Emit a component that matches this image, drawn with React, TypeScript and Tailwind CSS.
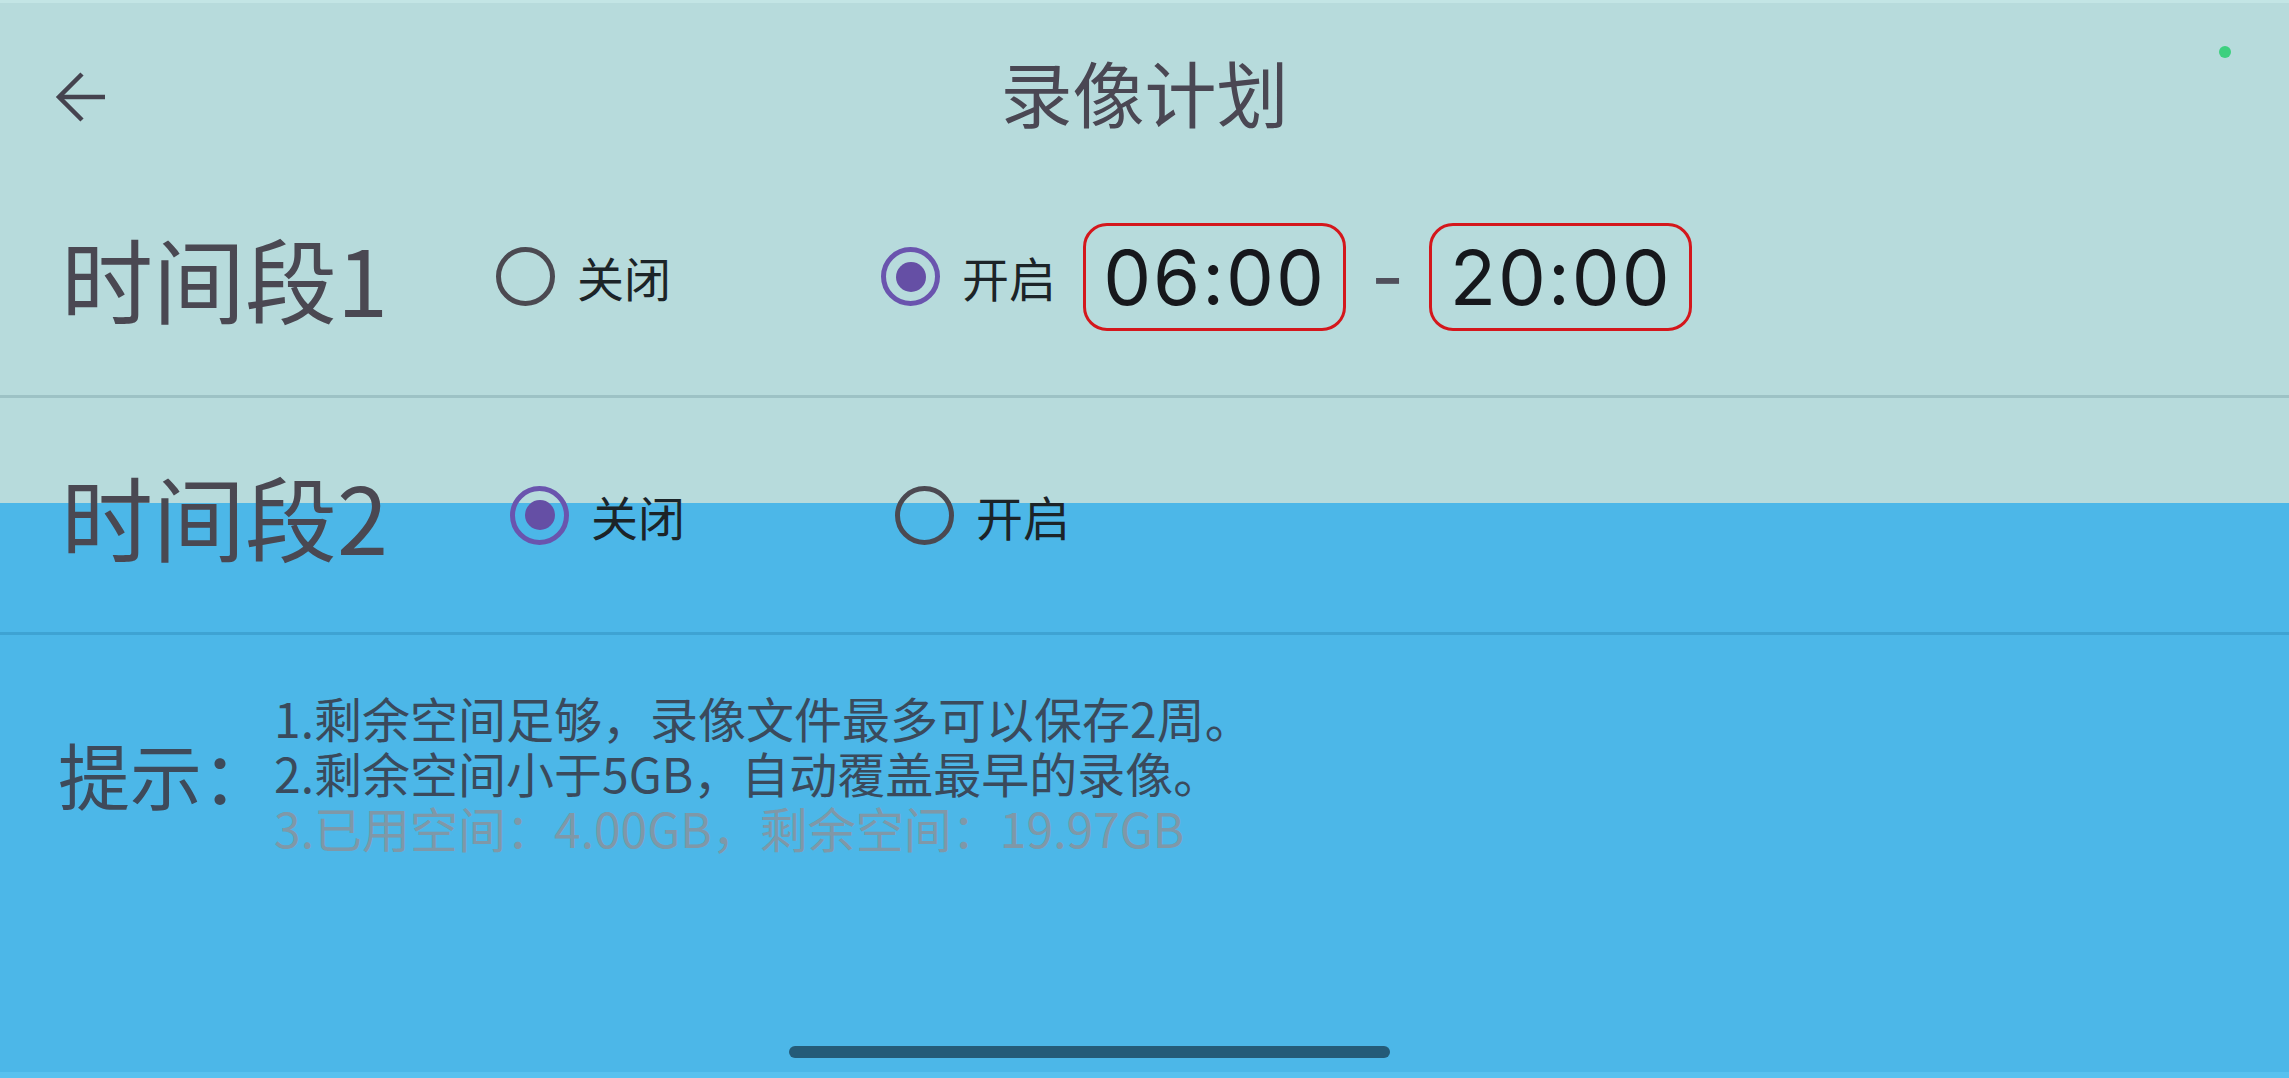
type RadioProps = {
  checked: boolean;
  label: string;
  wide?: boolean;
};

function Radio({ checked, label, wide }: RadioProps) {
  return (
    <div className={wide ? "flex w-[385px] items-center gap-[22px]" : "flex items-center gap-[22px]"}>
      {checked ? (
        <span className="flex size-[59px] items-center justify-center rounded-full border-[5px] border-[#6a54ae]">
          <span className="size-[30px] rounded-full bg-[#654fa5]" />
        </span>
      ) : (
        <span className="size-[59px] rounded-full border-[5px] border-[#4b4951]" />
      )}
      <span className="text-[47px] leading-none text-[#1c2428]">{label}</span>
    </div>
  );
}

function TimeBox({ value }: { value: string }) {
  return (
    <div className="flex h-[108px] w-[263px] items-center justify-center rounded-[24px] border-[3px] border-[#d4171c]">
      <span className="font-['Inter',sans-serif] text-[76px] leading-none tracking-[2px] text-[#16181c]">
        {value}
      </span>
    </div>
  );
}

function BackArrow() {
  return (
    <svg width="52" height="50" viewBox="0 0 52 50" fill="none" stroke="#45434f" strokeWidth="4.5">
      <path d="M50 25H4" />
      <path d="M27 2L4 25L27 48" strokeLinejoin="miter" />
    </svg>
  );
}

export default function App() {
  return (
    <main className="relative flex h-[1078px] w-full flex-col overflow-hidden bg-[linear-gradient(to_bottom,#b7dbdc_503px,#4cb7e8_503px)] font-['Noto_Sans_CJK_SC',sans-serif]">
      <span className="absolute left-[2219px] top-[46px] size-3 rounded-full bg-[#3dd07f]" />

      <header className="relative flex h-[158px] items-center border-t-[3px] border-[#c3e5e5] pt-[33px]">
        <button className="ml-[55px] flex items-center" type="button">
          <BackArrow />
        </button>
        <h1 className="absolute inset-x-0 top-[52px] text-center text-[72px] leading-none text-[#4a4753]">
          录像计划
        </h1>
      </header>

      <section className="flex h-[240px] items-center border-b-[3px] border-[#9dc2c5] pl-[61px]">
        <h2 className="mr-[108px] text-[92px] leading-none text-[#4a4852]">时间段1</h2>
        <Radio checked={false} label="关闭" wide />
        <Radio checked label="开启" />
        <div className="ml-[27px] flex items-center gap-[25px]">
          <TimeBox value="06:00" />
          <span className="font-['Inter',sans-serif] text-[72px] leading-none text-[#50505c]">-</span>
          <TimeBox value="20:00" />
        </div>
      </section>

      <section className="flex h-[237px] items-center border-b-[3px] border-[#3ea3d3] pl-[61px]">
        <h2 className="mr-[122px] text-[92px] leading-none text-[#4a4852]">时间段2</h2>
        <Radio checked label="关闭" wide />
        <Radio checked={false} label="开启" />
      </section>

      <section className="mt-[55px] flex items-center pl-[58px]">
        <p className="text-[72px] leading-none text-[#3e4a5a]">提示：</p>
        <div className="text-[48px] leading-[55px]">
          <p className="text-[#3a4a5c]">1.剩余空间足够，录像文件最多可以保存2周。</p>
          <p className="text-[#3a4a5c]">2.剩余空间小于5GB，自动覆盖最早的录像。</p>
          <p className="text-[#7f98a8]">3.已用空间：4.00GB，剩余空间：19.97GB</p>
        </div>
      </section>

      <div className="flex-1" />
      <div className="mb-[14px] ml-[789px] h-[12px] w-[601px] rounded-full bg-[#245b78]" />
      <div className="h-[6px] bg-[#58c1ef]" />
    </main>
  );
}
